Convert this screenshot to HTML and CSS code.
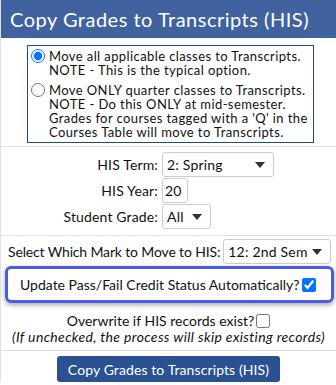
FILE: index.html
```html
<!DOCTYPE html>
<html lang="en">
<head>
    <meta charset="UTF-8">
    <title>Copy Grades to Transcripts (HIS)</title>
    <link rel="stylesheet" href="styles.css">
</head>
<body>
    <div class="panel">
        <h1 class="title">Copy Grades to Transcripts (HIS)</h1>

        <div class="section">
            <div class="radio-box">
                <label class="option">
                    <input type="radio" name="mode" checked>
                    <span>Move all applicable classes to Transcripts.<br>NOTE - This is the typical option.</span>
                </label>
                <label class="option">
                    <input type="radio" name="mode">
                    <span>Move ONLY quarter classes to Transcripts.<br>NOTE - Do this ONLY at mid-semester.<br>Grades for courses tagged with a 'Q' in the<br>Courses Table will move to Transcripts.</span>
                </label>
            </div>
        </div>

        <div class="section fields">
            <label class="field-label">HIS Term:</label>
            <div class="select-wrap term"><select><option>2: Spring</option></select></div>
            <label class="field-label">HIS Year:</label>
            <div><input class="year" type="text" value="20"></div>
            <label class="field-label">Student Grade:</label>
            <div class="select-wrap grade"><select><option>All</option></select></div>
        </div>

        <div class="mark-row">
            <label class="field-label">Select Which Mark to Move to HIS:</label>
            <div class="select-wrap mark"><select><option>12: 2nd Sem</option></select></div>
        </div>

        <div class="highlight">
            <label>Update Pass/Fail Credit Status Automatically?<input type="checkbox" checked></label>
        </div>

        <div class="section overwrite">
            <label>Overwrite if HIS records exist?<input type="checkbox"></label>
            <div class="hint">(If unchecked, the process will skip existing records)</div>
        </div>

        <div class="actions">
            <button class="btn">Copy Grades to Transcripts (HIS)</button>
        </div>
    </div>
</body>
</html>
```

FILE: styles.css
```css
body {
    margin: 0;
    font-family: Lato, "Open Sans", sans-serif;
    font-size: 14px;
    letter-spacing: 0.15px;
    color: #111;
    background: #fff;
}
.panel {
    width: 335px;
    border-left: 1px solid #e2e2e2;
}
.title {
    margin: 0;
    height: 38px;
    line-height: 38px;
    padding-left: 9px;
    background-color: #40629f;
    color: #fff;
    font-size: 20px;
    font-weight: normal;
    letter-spacing: 0.5px;
    white-space: nowrap;
}
.section {
    border-bottom: 1px solid #e0e0e0;
}
.radio-box {
    margin: 7px 22px 3px 26px;
    border: 1px solid #1e4a8a;
    padding: 3px 0 3px 2px;
    display: flex;
    flex-direction: column;
    gap: 6px;
    font-size: 13px;
    line-height: 14px;
    letter-spacing: 0.4px;
    white-space: nowrap;
}
.option {
    display: flex;
    align-items: flex-start;
}
.option input {
    margin: 0 4px 0 1px;
    width: 14px;
    height: 14px;
    flex-shrink: 0;
}
.fields {
    display: grid;
    grid-template-columns: 157px auto;
    column-gap: 4px;
    row-gap: 1px;
    align-items: center;
    justify-items: start;
    padding: 5px 0 6px;
}
.fields .field-label {
    justify-self: end;
}
.field-label {
    text-align: right;
    white-space: nowrap;
}
.select-wrap {
    position: relative;
    display: inline-block;
    line-height: 0;
}
.select-wrap::after {
    content: '';
    position: absolute;
    right: 9px;
    top: 10px;
    border-left: 5px solid transparent;
    border-right: 5px solid transparent;
    border-top: 6px solid #333;
    pointer-events: none;
}
select, .year {
    appearance: none;
    height: 25px;
    border: 1px solid #ccc;
    border-radius: 3px;
    background: #fff;
    font-family: inherit;
    font-size: 14px;
    letter-spacing: 0.2px;
    color: #111;
    padding: 0 4px;
    box-sizing: border-box;
}
.term select { width: 112px; }
.grade select { width: 49px; }
.mark select { width: 108px; }
.year { width: 26px; padding: 0 2px; }
.mark-row {
    display: flex;
    align-items: center;
    gap: 3px;
    padding: 3px 0 0 7px;
    letter-spacing: -0.15px;
}
.highlight {
    margin: 2px 2px 0 4px;
    height: 31px;
    border: 3px solid #4a5be6;
    border-radius: 6px;
    box-shadow: 0 2px 5px rgba(0,0,0,0.35);
    display: flex;
    align-items: center;
    padding-left: 12px;
    white-space: nowrap;
    letter-spacing: 0;
}
.highlight input,
.overwrite input {
    width: 14px;
    height: 14px;
    margin: 0 0 0 2px;
    vertical-align: -2px;
}
.overwrite {
    text-align: center;
    padding: 10px 0 5px;
    line-height: 16px;
    white-space: nowrap;
}
.overwrite label {
    letter-spacing: 0;
}
.hint {
    font-style: italic;
    letter-spacing: 0.35px;
}
.actions {
    text-align: center;
    padding-top: 5px;
}
.btn {
    width: 223px;
    height: 26px;
    padding: 0;
    background-color: #2a5293;
    color: #fff;
    border: none;
    border-radius: 3px;
    font-family: inherit;
    font-size: 14px;
    letter-spacing: 0.1px;
    white-space: nowrap;
}
```
